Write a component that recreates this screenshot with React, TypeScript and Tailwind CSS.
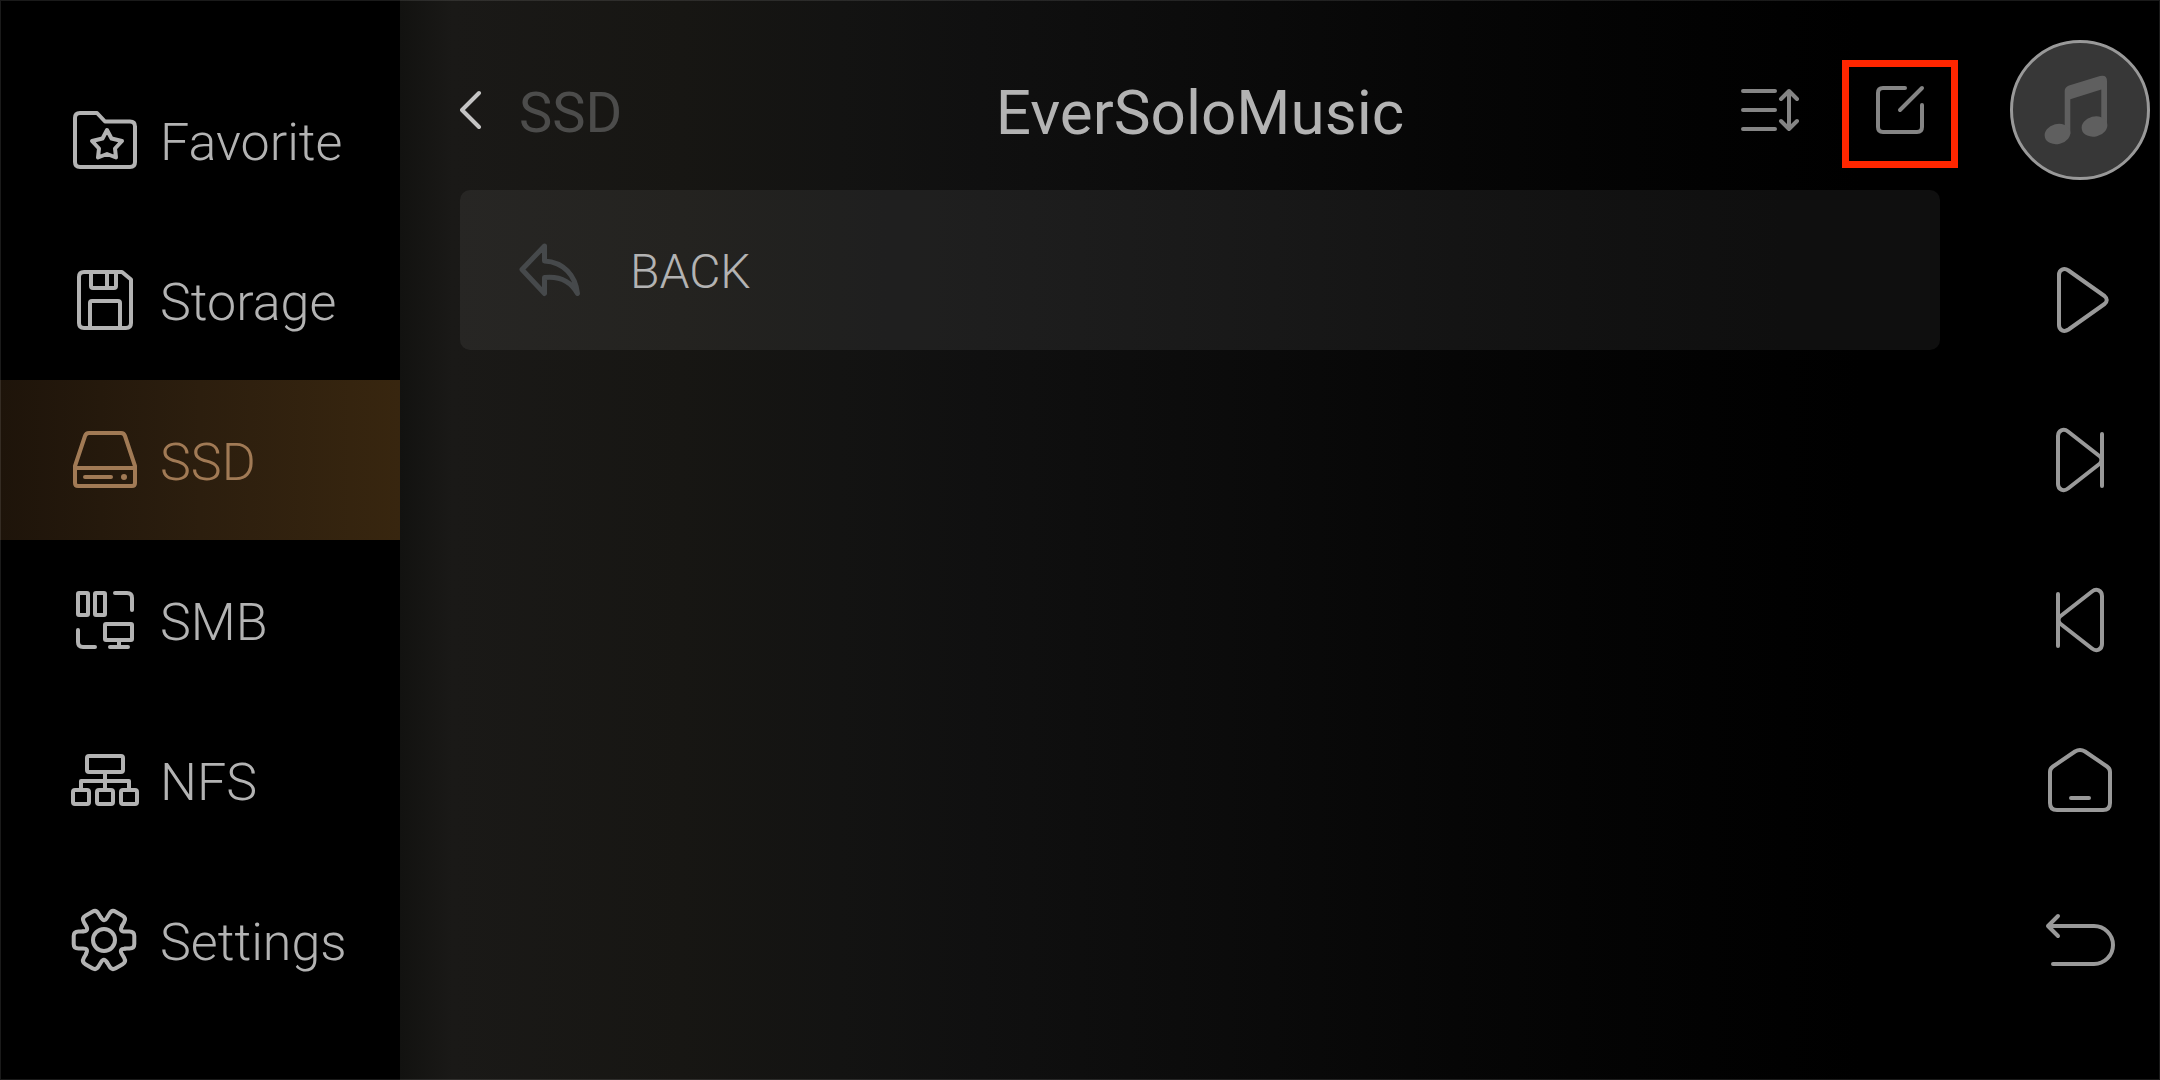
import type { ReactNode } from "react";

function Icon({ children }: { children: ReactNode }) {
  return (
    <svg
      viewBox="0 0 80 80"
      className="size-20 shrink-0"
      fill="none"
      stroke="currentColor"
      strokeWidth="4"
      strokeLinecap="round"
      strokeLinejoin="round"
      aria-hidden="true"
    >
      {children}
    </svg>
  );
}

const gearAngles = [0, 60, 120, 180, 240, 300];

const sources: { label: string; icon: ReactNode }[] = [
  {
    label: "Favorite",
    icon: (
      <>
        <path d="M16 13H33L41 21.500H66Q71 21.500 71 26.500V62Q71 67 66 67H16Q11 67 11 62V18Q11 13 16 13Z" />
        <path d="M43 30L47.500 38.500L58 41L51 48.500L52 57.500L43 54L34 57.500L35 48.500L28 41L38.500 38.500Z" />
      </>
    ),
  },
  {
    label: "Storage",
    icon: (
      <>
        <path d="M20 12H58L67 19.500V63Q67 68 62 68H20Q15 68 15 63V17Q15 12 20 12Z" />
        <path d="M27 13V26Q27 28 29 28H50Q52 28 52 26V13M43 13V27M26 67V43Q26 41 28 41H54Q56 41 56 43V67" />
      </>
    ),
  },
  {
    label: "SSD",
    icon: (
      <>
        <path d="M11 46L21 16Q22 13 25 13H57Q60 13 61 16L71 46V63Q71 66 68 66H14Q11 66 11 63ZM12 48H70M21 57H47" />
        <circle cx="60" cy="57" r="3" fill="currentColor" stroke="none" />
      </>
    ),
  },
  {
    label: "SMB",
    icon: (
      <>
        <rect x="14" y="13" width="10" height="22" rx="1" />
        <rect x="31" y="13" width="10" height="22" rx="1" />
        <rect x="41" y="44" width="27" height="16" rx="1" />
        <path d="M51 13H63Q68 13 68 18V30M14 50V62Q14 67 19 67H31M55 60V66M46 67H64" />
      </>
    ),
  },
  {
    label: "NFS",
    icon: (
      <>
        <rect x="23" y="16" width="36" height="16" rx="2" />
        <rect x="9" y="50" width="16" height="14" rx="2" />
        <rect x="33" y="50" width="16" height="14" rx="2" />
        <rect x="57" y="50" width="16" height="14" rx="2" />
        <path d="M41 32V49M17 49V41H65V49" />
      </>
    ),
  },
  {
    label: "Settings",
    icon: (
      <g transform="translate(40 40)">
        <circle r="11" />
        {gearAngles.map((a) => (
          <path
            key={a}
            transform={`rotate(${a})`}
            d="M18 -13.800Q15 -8.500 21 -8.500H25.500Q30.300 -8.500 30.300 -4V4Q30.300 8.500 25.500 8.500H21"
          />
        ))}
      </g>
    ),
  },
];

const controls: { label: string; icon: ReactNode }[] = [
  {
    label: "Play",
    icon: <path d="M19 15C19 9.500 24 7.500 28.500 10.500L64.500 36Q69 40 64.500 44L28.500 69.500C24 72.500 19 70.500 19 65Z" />,
  },
  {
    label: "Next",
    icon: <path d="M18 16C18 10.500 23.500 8 28 11.500L60 36.500Q63 40 60 43.500L28 68.500C23.500 72 18 69.500 18 64ZM62 14V66" />,
  },
  {
    label: "Previous",
    icon: <path d="M62 16C62 10.500 56.500 8 52 11.500L20 36.500Q17 40 20 43.500L52 68.500C56.500 72 62 69.500 62 64ZM18 14V66" />,
  },
  {
    label: "Home",
    icon: <path d="M10 32Q10 28.500 13 26.500L35 11.500Q40 8.500 45 11.500L67 26.500Q70 28.500 70 32V63Q70 70 63 70H17Q10 70 10 63ZM31 58H49" />,
  },
  {
    label: "Return",
    icon: <path d="M18 16L8 26L18 36M8 26H54A19 19 0 0 1 54 64H13" />,
  },
];

function Sidebar() {
  return (
    <nav aria-label="Sources" className="flex w-[400px] shrink-0 flex-col bg-black py-[60px]">
      {sources.map((s) => {
        const active = s.label === "SSD";
        return (
          <button
            key={s.label}
            type="button"
            aria-current={active ? "page" : undefined}
            className={
              active
                ? "flex h-40 items-center gap-4 bg-linear-to-r from-[#1e140a] via-[#2c1e0e] to-[#38260f] pl-16 text-[#a17a55]"
                : "flex h-40 items-center gap-4 pl-16 text-[#b3b3b3]"
            }
          >
            <Icon>{s.icon}</Icon>
            <span className="pt-1.5 text-[52px] font-light">{s.label}</span>
          </button>
        );
      })}
    </nav>
  );
}

function Browser() {
  return (
    <main className="flex min-w-0 flex-1 flex-col px-[60px] pt-[30px]">
      <header className="grid h-40 grid-cols-[1fr_auto_1fr] items-center">
        <button type="button" className="flex items-center gap-9 justify-self-start text-[#c4c4c4]">
          <svg
            viewBox="0 0 23 40"
            className="h-10 w-[23px]"
            fill="none"
            stroke="currentColor"
            strokeWidth="4"
            strokeLinecap="round"
            strokeLinejoin="round"
            aria-hidden="true"
          >
            <path d="M19 3L2 20L19 37" />
          </svg>
          <span className="pt-1.5 text-[56px] text-[#4c4c4b]">SSD</span>
        </button>
        <h1 className="pt-1 text-[62px] text-[#b3b3b3]">EverSoloMusic</h1>
        <div className="flex gap-[50px] justify-self-end text-[#858585]">
          <button type="button" aria-label="Sort">
            <Icon>
              <path d="M13 21H45M13 40H45M13 59H45M59 21V59M51 29L59 21L67 29M51 51L59 59L67 51" />
            </Icon>
          </button>
          <button type="button" aria-label="Edit" className="relative">
            <Icon>
              <path d="M45 18H23Q18 18 18 23V57Q18 62 23 62H57Q62 62 62 57V35M62 18L40 40" />
            </Icon>
            <span className="absolute -inset-x-[18px] -top-2.5 -bottom-[18px] border-7 border-[#ff2600]" />
          </button>
        </div>
      </header>
      <button type="button" className="flex h-40 items-center gap-10 rounded-[10px] bg-white/6 pl-[50px]">
        <span className="text-[#46494b]">
          <Icon>
            <path
              strokeWidth="5"
              d="M34.500 16L12 39.500L34.500 63.500V47.500C49 46 60 50 67.500 63.500C65.500 46 54 32 34.500 31Z"
            />
          </Icon>
        </span>
        <span className="pt-1 text-[48px] font-light text-[#b3b3b3]">BACK</span>
      </button>
    </main>
  );
}

function PlayerRail() {
  return (
    <aside aria-label="Player" className="flex w-40 shrink-0 flex-col items-center text-[#999999]">
      <div className="flex h-[220px] items-center">
        <button
          type="button"
          aria-label="Now playing"
          className="size-[140px] rounded-full border-3 border-[#999999] bg-[#373737]"
        >
          <svg viewBox="3 3 134 134" className="size-full" fill="#5f5f5f" aria-hidden="true">
            <path d="M54.700 94V51Q54.700 47 59 45.500L90 36Q97 34.500 97 41V86H91.300V49.500L60.300 59.300V94Z" />
            <ellipse cx="47.500" cy="94" rx="13" ry="10" transform="rotate(-14 47.500 94)" />
            <ellipse cx="84.500" cy="86.500" rx="13" ry="10" transform="rotate(-14 84.500 86.500)" />
          </svg>
        </button>
      </div>
      {controls.map((c) => (
        <button key={c.label} type="button" aria-label={c.label} className="flex h-40 items-center">
          <Icon>{c.icon}</Icon>
        </button>
      ))}
    </aside>
  );
}

export default function App() {
  return (
    <div className="relative flex min-h-screen bg-black font-['Roboto',sans-serif]">
      <Sidebar />
      <div className="flex min-w-0 flex-1 bg-[linear-gradient(to_right,#121210_0%,#1a1917_3%,#171613_16%,#131312_25%,#101010_33%,#0b0b0b_47%,#060606_60%,#030303_70%,#000_83%)]">
        <Browser />
        <PlayerRail />
      </div>
      <div className="pointer-events-none absolute inset-0 border border-white/10" />
    </div>
  );
}
